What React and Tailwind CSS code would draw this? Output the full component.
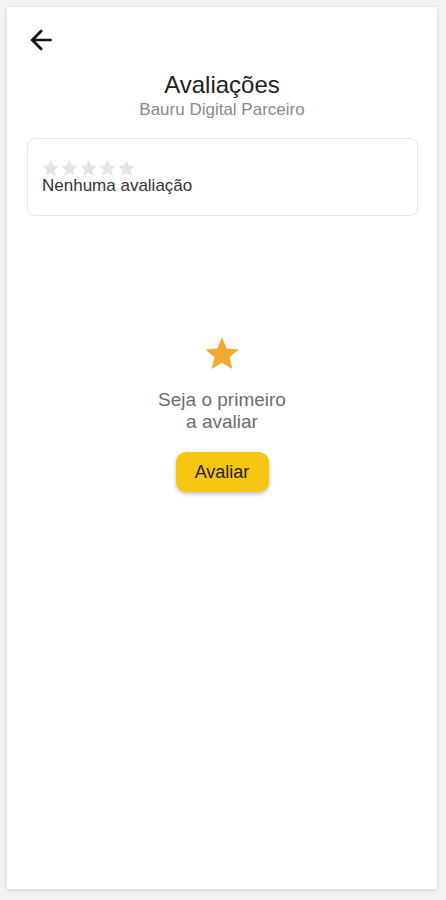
import React from "react";

const STAR = "M12 17.27L18.18 21l-1.64-7.03L22 9.24l-7.19-.61L12 2 9.19 8.63 2 9.24l5.46 4.73L5.82 21z";

function SmallStar() {
  return (
    <svg viewBox="2 2 20 19" className="w-[17px] h-[16px] block" fill="#e4e4e4">
      <path d={STAR} />
    </svg>
  );
}

export default function App() {
  return (
    <div
      className="h-[900px] w-full bg-[#f3f3f3] pl-[7px] pt-[7px]"
      style={{ fontFamily: '"Liberation Sans", Arial, sans-serif' }}
    >
      <div className="w-[430px] h-[882px] bg-white shadow-[0_1px_4px_rgba(0,0,0,0.14)] flex flex-col">
        <div className="pl-[18px] pt-[17px]">
          <svg viewBox="0 0 24 24" className="w-[32px] h-[32px] block" fill="#111">
            <path d="M20 11H7.83l5.59-5.59L12 4l-8 8 8 8 1.41-1.41L7.83 13H20v-2z" />
          </svg>
        </div>
        <div className="mt-[15px] flex flex-col items-center">
          <h1 className="text-[24px] leading-[28px] text-[#222]">Avaliações</h1>
          <p className="mt-[1px] text-[17px] leading-[20px] text-[#8a8a8a]">Bauru Digital Parceiro</p>
        </div>
        <div className="ml-[20px] mr-[19px] mt-[18px] border border-[#e6e6e6] rounded-[8px] pl-[14px] pt-[21px] pb-[19px]">
          <div className="flex gap-[2px]">
            <SmallStar />
            <SmallStar />
            <SmallStar />
            <SmallStar />
            <SmallStar />
          </div>
          <p className="text-[17px] leading-[20px] text-[#333]">Nenhuma avaliação</p>
        </div>
        <div className="flex flex-col items-center mt-[118px]">
          <svg viewBox="0 0 24 24" className="w-[40px] h-[40px] block" fill="#f0aa2f">
            <path d={STAR} />
          </svg>
          <p className="mt-[15px] text-[19px] leading-[22px] text-[#6e6e6e] text-center">
            Seja o primeiro
            <br />
            a avaliar
          </p>
          <button className="mt-[19px] h-[40px] w-[93px] rounded-[10px] bg-[#f6c612] text-[18px] text-[#222] shadow-[0_2px_4px_rgba(0,0,0,0.25)]">
            Avaliar
          </button>
        </div>
      </div>
    </div>
  );
}
